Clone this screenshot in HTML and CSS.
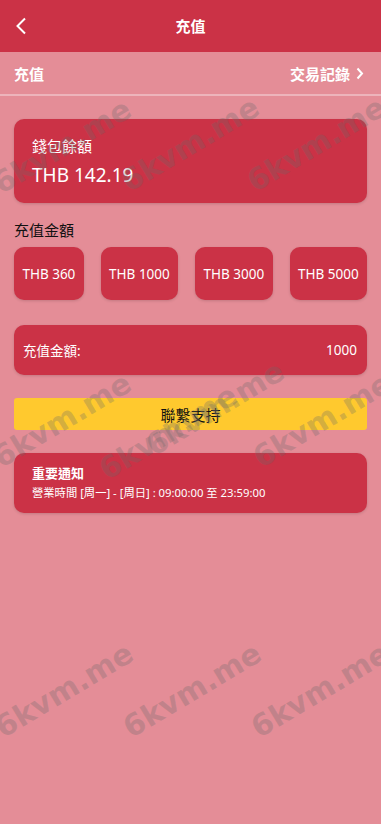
FILE: index.html
```html
<!DOCTYPE html>
<html lang="zh-Hant">
<head>
<meta charset="utf-8">
<meta name="viewport" content="width=device-width, initial-scale=1">
<title>充值</title>
<link rel="stylesheet" href="styles.css">
</head>
<body>
<div class="page">
  <header class="topbar">
    <span class="back">
      <svg width="12" height="18" viewBox="0 0 12 18"><polyline points="10,1.5 2.5,9 10,16.5" fill="none" stroke="#fff" stroke-width="2"/></svg>
    </span>
    <h1 class="title">充值</h1>
  </header>
  <div class="subbar">
    <span class="sub-title">充值</span>
    <span class="sub-link">交易記錄
      <svg width="8" height="13" viewBox="0 0 8 13"><polyline points="1.5,1.5 6,6.5 1.5,11.5" fill="none" stroke="#fff" stroke-width="2"/></svg>
    </span>
  </div>
  <main class="content">
    <section class="card wallet">
      <div class="wallet-label">錢包餘額</div>
      <div class="wallet-amount">THB 142.19</div>
    </section>
    <div class="section-label">充值金額</div>
    <div class="amounts">
      <button class="amount">THB 360</button>
      <button class="amount">THB 1000</button>
      <button class="amount">THB 3000</button>
      <button class="amount">THB 5000</button>
    </div>
    <div class="card input-row">
      <span>充值金額:</span>
      <span>1000</span>
    </div>
    <button class="support">聯繫支持</button>
    <section class="card notice">
      <div class="notice-title">重要通知</div>
      <div class="notice-text">營業時間 [周一] - [周日] : 09:00:00 至 23:59:00</div>
    </section>
  </main>
  <div class="wm-layer" aria-hidden="true">
    <span class="wm wm1">6kvm.me</span>
    <span class="wm wm2">6kvm.me</span>
    <span class="wm wm3">6kvm.me</span>
    <span class="wm wm4">6kvm.me</span>
    <span class="wm wm5">6kvm.me</span>
    <span class="wm wm6">6kvm.me</span>
    <span class="wm wm7">6kvm.me</span>
    <span class="wm wm8">6kvm.me</span>
    <span class="wm wm9">6kvm.me</span>
    <span class="wm wm10">6kvm.me</span>
  </div>
</div>
</body>
</html>
```

FILE: styles.css
```css
* { box-sizing: border-box; }
html, body {
  margin: 0;
  padding: 0;
  background: #e48d97;
}
body {
  font-family: "Noto Sans", "Noto Sans CJK TC", sans-serif;
  color: #fff;
}
.page {
  position: relative;
  width: 381px;
  min-height: 824px;
  overflow: hidden;
}
.topbar {
  height: 52px;
  background: #cb3246;
  display: flex;
  align-items: center;
  justify-content: center;
  position: relative;
}
.back {
  position: absolute;
  left: 15px;
  top: 17px;
  display: flex;
}
.title {
  margin: 0;
  font-size: 15px;
  font-weight: 700;
  line-height: 20px;
}
.subbar {
  height: 44px;
  display: flex;
  align-items: center;
  justify-content: space-between;
  padding: 0 17px 0 14px;
  border-bottom: 2px solid rgba(255, 255, 255, 0.35);
  font-size: 15px;
  font-weight: 700;
}
.sub-link {
  display: flex;
  align-items: center;
  gap: 6px;
}
.content {
  padding: 23px 14px 0;
  display: flex;
  flex-direction: column;
}
.card {
  background: #cb3246;
  border-radius: 10px;
  box-shadow: 0 1px 3px rgba(0, 0, 0, 0.15);
}
.wallet {
  padding: 17px 18px 15px;
  display: flex;
  flex-direction: column;
  gap: 6px;
}
.wallet-label {
  font-size: 15px;
  line-height: 20px;
}
.wallet-amount {
  font-size: 19px;
  line-height: 26px;
}
.section-label {
  margin-top: 17px;
  font-size: 15px;
  line-height: 20px;
  color: #111;
}
.amounts {
  margin-top: 7px;
  display: flex;
  gap: 17px;
}
.amount {
  flex: 1 1 auto;
  height: 53px;
  padding: 0;
  border: none;
  border-radius: 10px;
  background: #cb3246;
  color: #fff;
  font-family: inherit;
  font-size: 13.5px;
  box-shadow: 0 1px 3px rgba(0, 0, 0, 0.15);
}
.input-row {
  margin-top: 25px;
  height: 50px;
  display: flex;
  align-items: center;
  justify-content: space-between;
  padding: 0 10px 0 9px;
  font-size: 13.5px;
}
.support {
  margin-top: 23px;
  height: 32px;
  border: none;
  border-radius: 3px;
  background: #ffc92e;
  color: #111;
  font-family: inherit;
  font-size: 15px;
}
.notice {
  margin-top: 23px;
  padding: 11px 18px;
  display: flex;
  flex-direction: column;
  gap: 2px;
}
.notice-title {
  font-size: 13px;
  font-weight: 700;
  line-height: 18px;
}
.notice-text {
  font-size: 11.3px;
  line-height: 18px;
}
.wm-layer {
  position: absolute;
  inset: 0;
  pointer-events: none;
}
.wm {
  position: absolute;
  transform: translate(-50%, -50%) rotate(-31deg);
  font-family: "DejaVu Sans", sans-serif;
  font-weight: 700;
  font-size: 30px;
  color: rgba(105, 105, 105, 0.28);
  white-space: nowrap;
}
.wm1 { left: 62px; top: 146px; }
.wm2 { left: 190px; top: 144px; }
.wm3 { left: 316px; top: 144px; }
.wm4 { left: 62px; top: 420px; }
.wm5 { left: 168px; top: 432px; }
.wm6 { left: 215px; top: 408px; }
.wm7 { left: 322px; top: 420px; }
.wm8 { left: 64px; top: 690px; }
.wm9 { left: 192px; top: 690px; }
.wm10 { left: 320px; top: 690px; }
```
